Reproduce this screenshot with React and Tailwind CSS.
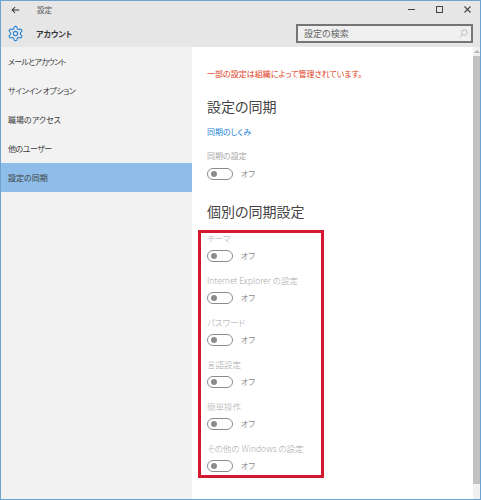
import React from 'react'

const font = { fontFamily: '"Noto Sans CJK JP", sans-serif', fontFeatureSettings: '"palt"' }

const sideItems = [
  { label: 'メールとアカウント', spacing: 'tracking-[-0.8px]' },
  { label: 'サインイン オプション', spacing: 'tracking-[-0.5px]' },
  { label: '職場のアクセス', spacing: '' },
  { label: '他のユーザー', spacing: 'tracking-[-0.5px]' },
  { label: '設定の同期', spacing: '' },
]

const syncItems = ['テーマ', 'Internet Explorer の設定', 'パスワード', '言語設定', '簡単操作', 'その他の Windows の設定']

const Toggle = () => (
  <div className="flex items-center h-[14px]">
    <div className="w-[26px] h-[12px] rounded-full border-[1.5px] border-[#8c8c8c] flex items-center pl-[3px]">
      <div className="w-[6px] h-[6px] rounded-full bg-[#8c8c8c]" />
    </div>
    <span className="ml-[8px] text-[8px] leading-[14px] text-[#8a8a8a]">オフ</span>
  </div>
)

const Setting = ({ label }) => (
  <div className="h-[42px] flex flex-col">
    <div className="h-[16px] mt-[1px] text-[8.5px] leading-[16px] font-light text-[#a8a8a8] whitespace-nowrap">{label}</div>
    <div className="mt-[3px]">
      <Toggle />
    </div>
  </div>
)

const App = () => {
  return (
    <div
      className="relative w-[481px] h-[500px] overflow-hidden bg-white border border-[#6fa3cf] flex flex-col"
      style={font}
    >
      <header className="h-[46px] shrink-0 bg-[#e6e6e6] flex flex-col">
        <div className="h-[17px] flex items-center text-[#3a3a3a]">
          <svg className="ml-[10px]" width="9" height="8" viewBox="0 0 12 10" fill="none" stroke="#333" strokeWidth="1.4">
            <path d="M11 5H1.5M5.5 1 1.5 5l4 4" />
          </svg>
          <span className="ml-[17px] text-[7.5px] text-[#555]">設定</span>
          <div className="ml-auto flex items-center">
            <div className="w-[7px] h-[1.5px] bg-[#444]" />
            <div className="ml-[21px] w-[7px] h-[7px] border-[1.5px] border-[#444]" />
            <svg className="ml-[21px] mr-[9px]" width="7" height="7" viewBox="0 0 7 7" stroke="#444" strokeWidth="1.1">
              <path d="M0.5 0.5l6 6M6.5 0.5l-6 6" />
            </svg>
          </div>
        </div>
        <div className="h-[29px] pt-[2px] flex items-center">
          <svg className="ml-[6px]" width="17" height="17" viewBox="0 0 24 24" fill="none" stroke="#2f86d6" strokeWidth="1.6" strokeLinecap="round" strokeLinejoin="round">
            <path d="M12.22 2h-.44a2 2 0 0 0-2 2v.18a2 2 0 0 1-1 1.73l-.43.25a2 2 0 0 1-2 0l-.15-.08a2 2 0 0 0-2.73.73l-.22.38a2 2 0 0 0 .73 2.73l.15.1a2 2 0 0 1 1 1.72v.51a2 2 0 0 1-1 1.74l-.15.09a2 2 0 0 0-.73 2.73l.22.38a2 2 0 0 0 2.73.73l.15-.08a2 2 0 0 1 2 0l.43.25a2 2 0 0 1 1 1.73V20a2 2 0 0 0 2 2h.44a2 2 0 0 0 2-2v-.18a2 2 0 0 1 1-1.73l.43-.25a2 2 0 0 1 2 0l.15.08a2 2 0 0 0 2.73-.73l.22-.39a2 2 0 0 0-.73-2.73l-.15-.08a2 2 0 0 1-1-1.74v-.5a2 2 0 0 1 1-1.74l.15-.09a2 2 0 0 0 .73-2.73l-.22-.38a2 2 0 0 0-2.73-.73l-.15.08a2 2 0 0 1-2 0l-.43-.25a2 2 0 0 1-1-1.73V4a2 2 0 0 0-2-2z" />
            <circle cx="12" cy="12" r="3" />
          </svg>
          <span className="ml-[12px] text-[8px] font-bold text-[#333]">アカウント</span>
          <div className="ml-auto mr-[7px] w-[177px] h-[19px] bg-[#f0f0f0] border-2 border-[#757575] flex items-center pl-[6px] pr-[3px]">
            <span className="text-[9px] text-[#666]">設定の検索</span>
            <svg className="ml-auto" width="9" height="9" viewBox="0 0 24 24" fill="none" stroke="#aaa" strokeWidth="2">
              <circle cx="14.5" cy="9.5" r="7.5" />
              <path d="M9 15l-7 7" />
            </svg>
          </div>
        </div>
      </header>

      <div className="flex-1 flex min-h-0">
        <nav className="w-[191px] shrink-0 bg-[#f2f2f2]">
          {sideItems.map((item, i) => (
            <div
              key={item.label}
              className={`h-[29px] pl-[7px] flex items-center text-[8px] text-[#3c3c3c] ${item.spacing} ${i === 4 ? 'bg-[#8dbde8]' : ''}`}
            >
              {item.label}
            </div>
          ))}
        </nav>

        <main className="flex-1 min-w-0 pl-[15px]">
          <p className="mt-[20px] h-[14px] text-[8px] leading-[14px] text-[#e0401c] whitespace-nowrap">
            一部の設定は組織によって管理されています。
          </p>
          <h2 className="mt-[14px] h-[22px] text-[14px] leading-[22px] text-[#444]">設定の同期</h2>
          <p className="mt-[8px] h-[14px] text-[8px] leading-[14px] text-[#1a84d8]">同期のしくみ</p>
          <div className="mt-[10px] h-[14px] text-[8px] leading-[14px] text-[#a8a8a8]">同期の設定</div>
          <div className="mt-[4px]">
            <Toggle />
          </div>
          <h2 className="mt-[19px] h-[22px] text-[14px] leading-[22px] text-[#444]">個別の同期設定</h2>
          <div className="mt-[7px]">
            {syncItems.map((item) => (
              <Setting key={item} label={item} />
            ))}
          </div>
        </main>

        <aside className="w-[7px] shrink-0 bg-[#f0f0f0] flex flex-col">
          <div className="h-[9px] flex items-center justify-center">
            <div className="w-0 h-0 border-x-[3px] border-x-transparent border-b-[3px] border-b-[#b5b5b5]" />
          </div>
          <div className="flex-1 bg-[#c2c2c2]" />
          <div className="h-[15px]" />
        </aside>
      </div>

      {/* red annotation drawn over the screenshot */}
      <div className="absolute left-[197px] top-[229px] w-[126px] h-[248px] border-[3px] border-[#d3182f]" />
    </div>
  )
}

export default App
